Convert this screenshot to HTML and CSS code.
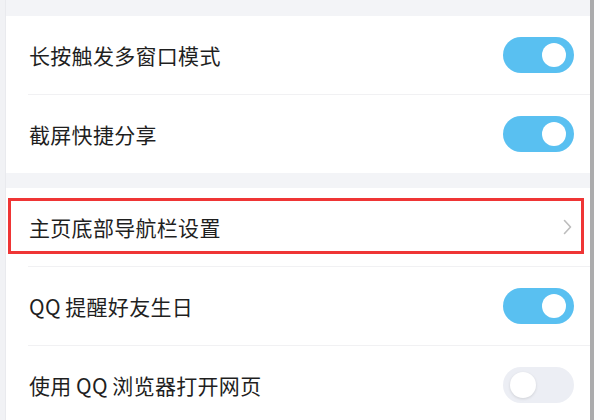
FILE: index.html
```html
<!DOCTYPE html>
<html lang="zh-CN">
<head>
<meta charset="utf-8">
<link rel="stylesheet" href="styles.css">
</head>
<body>
<div class="screen">
  <div class="edge-left"></div>
  <div class="content">
    <div class="band top"></div>
    <div class="group">
      <div class="row">
        <span class="label">长按触发多窗口模式</span>
        <span class="switch on"><span class="knob"></span></span>
      </div>
      <div class="row">
        <span class="label">截屏快捷分享</span>
        <span class="switch on"><span class="knob"></span></span>
      </div>
    </div>
    <div class="band mid"></div>
    <div class="group">
      <div class="row nav">
        <span class="label">主页底部导航栏设置</span>
        <svg class="chevron" width="9" height="16" viewBox="0 0 9 16"><polyline points="1.5,1.5 7.5,8 1.5,14.5" fill="none" stroke="#bdbdbd" stroke-width="1.6" stroke-linecap="round" stroke-linejoin="round"/></svg>
        <div class="highlight"></div>
      </div>
      <div class="row">
        <span class="label">QQ&#8201;提醒好友生日</span>
        <span class="switch on"><span class="knob"></span></span>
      </div>
      <div class="row">
        <span class="label">使用&#8201;QQ&#8201;浏览器打开网页</span>
        <span class="switch off"><span class="knob"></span></span>
      </div>
    </div>
  </div>
  <div class="scrollbar"></div>
  <div class="edge-right"></div>
</div>
</body>
</html>
```
FILE: styles.css
```css
html, body {
  margin: 0;
  padding: 0;
  background: #ffffff;
}
.screen {
  width: 600px;
  height: 420px;
  overflow: hidden;
  display: flex;
  font-family: "Noto Sans CJK SC", "Noto Sans", sans-serif;
}
.edge-left {
  width: 5px;
  background: #f1f2f5;
  border-right: 1px solid #e9eaee;
  flex: none;
}
.content {
  flex: 1;
  display: flex;
  flex-direction: column;
}
.band {
  background: #f3f4f7;
  flex: none;
}
.band.top { height: 16px; }
.band.mid { height: 15px; }
.group {
  background: #ffffff;
  display: flex;
  flex-direction: column;
}
.row {
  position: relative;
  height: 78px;
  display: flex;
  align-items: center;
  justify-content: space-between;
  padding-left: 23px;
  padding-right: 16px;
  box-sizing: border-box;
}
.row + .row::before {
  content: "";
  position: absolute;
  top: -1px;
  left: 22px;
  right: 0;
  height: 1px;
  background: #f1f1f3;
}
.row + .row {
  margin-top: 1px;
}
.label {
  font-size: 21px;
  color: #1f1f1f;
  letter-spacing: 0.3px;
}
.switch {
  width: 71px;
  height: 36px;
  border-radius: 18px;
  display: flex;
  align-items: center;
  box-sizing: border-box;
}
.switch.on {
  background: #59c0f1;
  justify-content: flex-end;
  padding-right: 8px;
}
.switch.off {
  background: #eceef4;
  justify-content: flex-start;
  padding-left: 7px;
}
.knob {
  width: 24px;
  height: 24px;
  border-radius: 50%;
  background: #ffffff;
}
.switch.off .knob {
  width: 26px;
  height: 26px;
  box-shadow: 0 1px 3px rgba(0, 0, 0, 0.12);
}
.chevron {
  margin-right: 2px;
}
.highlight {
  position: absolute;
  left: 2px;
  top: 10px;
  width: 576px;
  height: 56px;
  border: 3px solid #ef3535;
  box-sizing: border-box;
  pointer-events: none;
}
.scrollbar {
  width: 4px;
  background: #a9a9ab;
  flex: none;
}
.edge-right {
  width: 6px;
  background: #fbfbfc;
  flex: none;
}
```
